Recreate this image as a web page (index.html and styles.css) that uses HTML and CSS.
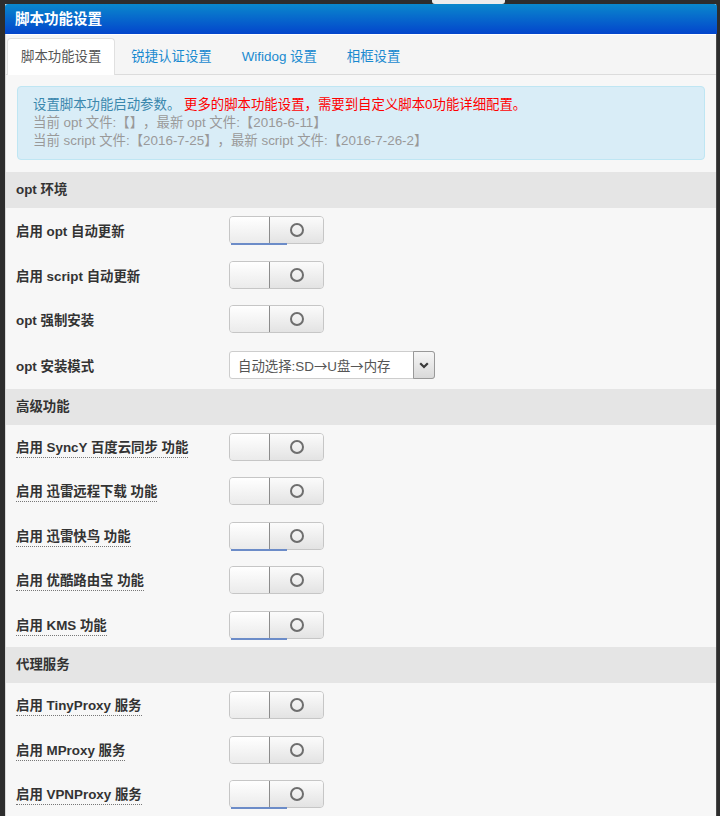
FILE: index.html
```html
<!DOCTYPE html>
<html lang="zh-CN">
<head>
<meta charset="utf-8">
<title>脚本功能设置</title>
<link rel="stylesheet" href="styles.css">
</head>
<body>
<div class="topnub"></div>
<div class="window">
  <div class="titlebar">脚本功能设置</div>
  <div class="tabs">
    <span class="tab active">脚本功能设置</span>
    <span class="tab">锐捷认证设置</span>
    <span class="tab">Wifidog 设置</span>
    <span class="tab">相框设置</span>
  </div>
  <div class="content">
    <div class="alert">
      <div><span class="info">设置脚本功能启动参数。</span> <span class="warn">更多的脚本功能设置，需要到自定义脚本0功能详细配置。</span></div>
      <div class="muted">当前 opt 文件:【】，最新 opt 文件:【2016-6-11】</div>
      <div class="muted">当前 script 文件:【2016-7-25】，最新 script 文件:【2016-7-26-2】</div>
    </div>

    <div class="section-head">opt 环境</div>
    <div class="row">
      <span class="label">启用 opt 自动更新</span>
      <div class="switch focus"><div class="sw-left"></div><div class="sw-right"><span class="knob"></span></div></div>
    </div>
    <div class="row">
      <span class="label">启用 script 自动更新</span>
      <div class="switch"><div class="sw-left"></div><div class="sw-right"><span class="knob"></span></div></div>
    </div>
    <div class="row">
      <span class="label">opt 强制安装</span>
      <div class="switch"><div class="sw-left"></div><div class="sw-right"><span class="knob"></span></div></div>
    </div>
    <div class="row tall">
      <span class="label">opt 安装模式</span>
      <div class="select">
        <span class="select-text">自动选择:SD<span class="cjk">→</span>U盘<span class="cjk">→</span>内存</span>
        <span class="select-arrow"><svg width="10" height="7" viewBox="0 0 10 7"><polyline points="1.2,1.2 5,5 8.8,1.2" fill="none" stroke="#3a3a3a" stroke-width="2.2"/></svg></span>
      </div>
    </div>

    <div class="section-head">高级功能</div>
    <div class="row">
      <span class="label dotted">启用 SyncY 百度云同步 功能</span>
      <div class="switch"><div class="sw-left"></div><div class="sw-right"><span class="knob"></span></div></div>
    </div>
    <div class="row">
      <span class="label dotted">启用 迅雷远程下载 功能</span>
      <div class="switch"><div class="sw-left"></div><div class="sw-right"><span class="knob"></span></div></div>
    </div>
    <div class="row">
      <span class="label dotted">启用 迅雷快鸟 功能</span>
      <div class="switch focus"><div class="sw-left"></div><div class="sw-right"><span class="knob"></span></div></div>
    </div>
    <div class="row">
      <span class="label dotted">启用 优酷路由宝 功能</span>
      <div class="switch"><div class="sw-left"></div><div class="sw-right"><span class="knob"></span></div></div>
    </div>
    <div class="row">
      <span class="label dotted">启用 KMS 功能</span>
      <div class="switch focus"><div class="sw-left"></div><div class="sw-right"><span class="knob"></span></div></div>
    </div>

    <div class="section-head">代理服务</div>
    <div class="row">
      <span class="label dotted">启用 TinyProxy 服务</span>
      <div class="switch"><div class="sw-left"></div><div class="sw-right"><span class="knob"></span></div></div>
    </div>
    <div class="row">
      <span class="label dotted">启用 MProxy 服务</span>
      <div class="switch"><div class="sw-left"></div><div class="sw-right"><span class="knob"></span></div></div>
    </div>
    <div class="row">
      <span class="label dotted">启用 VPNProxy 服务</span>
      <div class="switch focus"><div class="sw-left"></div><div class="sw-right"><span class="knob"></span></div></div>
    </div>
  </div>
</div>
</body>
</html>
```

FILE: styles.css
```css
html, body {
  margin: 0;
  padding: 0;
  height: 100%;
  overflow: hidden;
}
body {
  background: #2d2d2d;
  font-family: "Liberation Sans", "Noto Sans CJK SC", sans-serif;
  font-size: 13.4px;
  color: #333;
  text-spacing-trim: space-all;
}
.topnub {
  position: absolute;
  left: 432px;
  top: 0;
  width: 73px;
  height: 4px;
  background: #ececec;
  border-radius: 0 0 3px 3px;
}
.window {
  margin: 4px 3px 0 5px;
  height: 820px;
  background: #f7f7f7;
  border-right: 1px solid #4a4a4a;
  border-left: 1px solid #d8d8d8;
  box-sizing: border-box;
}
.titlebar {
  height: 30px;
  line-height: 30px;
  padding-left: 10px;
  margin-left: -1px;
  margin-right: -1px;
  background: linear-gradient(#0a88cc, #0345cc);
  color: #fff;
  font-weight: bold;
  font-size: 14.5px;
  border-radius: 3px 3px 0 0;
}
.tabs {
  display: flex;
  gap: 2px;
  padding: 3px 0 0 1px;
  background: #f5f5f5;
  border-top: 1px solid #fff;
  border-bottom: 1px solid #dcdcdc;
  height: 36px;
}
.tab {
  display: block;
  height: 36px;
  line-height: 36px;
  padding: 0 13px;
  color: #1a8ad0;
  border: 1px solid transparent;
  border-bottom: none;
  box-sizing: border-box;
}
.tab.active {
  background: #fff;
  color: #555;
  border-color: #e0e0e0;
  border-radius: 4px 4px 0 0;
  height: 37px;
  margin-bottom: -1px;
}
.content {
  padding-top: 11px;
}
.alert {
  margin: 0 11px 12px 11px;
  padding: 9px 15px;
  background: #d9edf7;
  border: 1px solid #bfe6f3;
  border-radius: 4px;
  line-height: 18px;
}
.info { color: #3a87ad; }
.warn { color: #ff0000; }
.muted { color: #999; }

.section-head {
  height: 36px;
  line-height: 36px;
  padding-left: 10px;
  background: #e5e5e5;
  font-weight: bold;
  color: #333;
}
.row {
  display: grid;
  grid-template-columns: 213px auto;
  align-items: center;
  justify-items: start;
  height: 44.5px;
  padding-left: 10px;
}
.row.tall { height: 47px; }
.label {
  font-weight: bold;
  color: #333;
}
.label.dotted {
  border-bottom: 1px dotted #777;
  padding-bottom: 1px;
}
.switch {
  position: relative;
  display: flex;
  width: 95px;
  height: 28px;
  box-sizing: border-box;
  border: 1px solid #c6c6c6;
  border-radius: 4px;
  background: #eee;
}
.sw-left {
  width: 39px;
  background: linear-gradient(#ffffff, #ebebeb);
  border-radius: 3px 0 0 3px;
  border-right: 1px solid #8c8c8c;
  box-shadow: 1px 0 0 #c8c8c8;
}
.sw-right {
  flex: 1;
  display: flex;
  align-items: center;
  justify-content: center;
  background: linear-gradient(#fbfbfb, #e3e3e3);
  border-radius: 0 3px 3px 0;
}
.knob {
  width: 14px;
  height: 14px;
  box-sizing: border-box;
  border: 2px solid #6e6e6e;
  border-radius: 50%;
}
.switch.focus::after {
  content: "";
  position: absolute;
  left: 1px;
  bottom: -2px;
  width: 56px;
  height: 2px;
  background: #6c8cc8;
}
.select {
  display: flex;
  align-items: center;
  width: 206px;
  height: 28px;
  box-sizing: border-box;
  border: 1px solid #cdcdcd;
  border-radius: 3px;
  background: #fff;
  color: #555;
}
.select-text {
  flex: 1;
  padding-left: 8px;
}
.cjk {
  font-family: "Noto Sans CJK SC", sans-serif;
}
.select-arrow {
  display: flex;
  align-items: center;
  justify-content: center;
  width: 22px;
  height: 28px;
  margin: -1px -1px -1px 0;
  box-sizing: border-box;
  border: 1px solid #999;
  border-radius: 0 3px 3px 0;
  background: linear-gradient(#f6f6f6, #d9d9d9);
}
```
